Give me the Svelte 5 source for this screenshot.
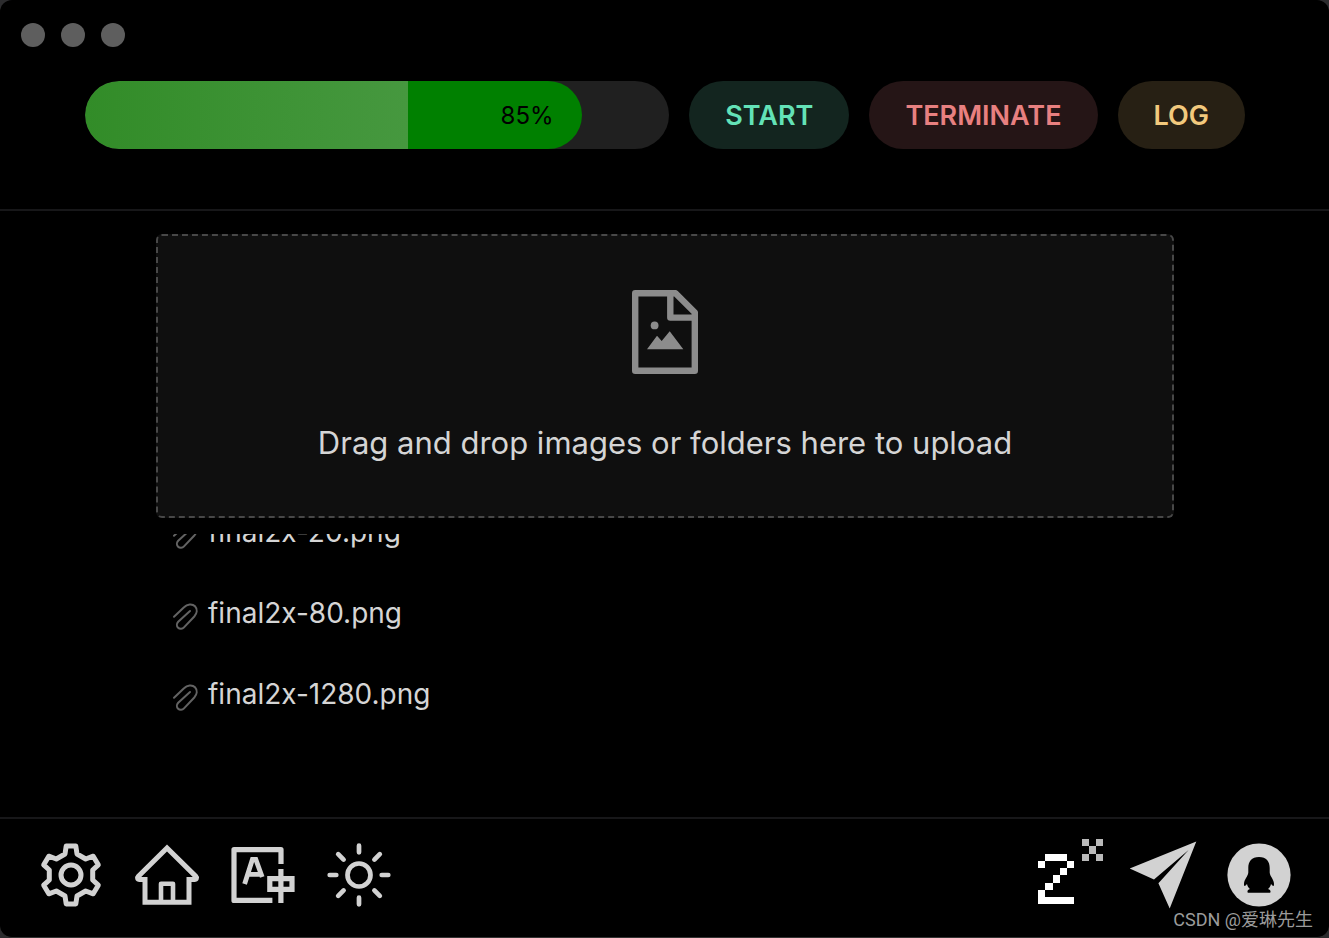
<script>
  let progress = 85;

  const files = ['final2x-20.png', 'final2x-80.png', 'final2x-1280.png'];
</script>

<div class="window">
  <header>
    <div class="lights">
      <span></span>
      <span></span>
      <span></span>
    </div>
    <div class="toolbar">
      <div class="progress" role="progressbar" aria-label="Progress" aria-valuenow={progress} aria-valuemin="0" aria-valuemax="100">
        <div class="fill" style="width: {progress}%">{progress}%</div>
      </div>
      <button class="pill start">START</button>
      <button class="pill terminate">TERMINATE</button>
      <button class="pill log">LOG</button>
    </div>
  </header>

  <main>
    <button class="dropzone">
      <svg width="66" height="84" viewBox="0 0 66 84" fill="none" stroke="currentColor" stroke-width="6.4" stroke-linejoin="round">
        <path d="M3.2 3.2H43.5L62.8 22.5V80.8H3.2Z" />
        <path d="M38.3 3.2V27.6H62.8" />
        <g fill="currentColor" stroke="none">
          <circle cx="22.6" cy="35.4" r="3.9" />
          <path d="M15 59.2L25 45.8L29.7 51L37.7 41.2L51.3 59.2Z" />
        </g>
      </svg>
      <span>Drag and drop images or folders here to upload</span>
    </button>

    <!-- kept scrolled to the newest file -->
    <ul class="files">
      {#each files as file}
        <li>
          <svg width="28" height="28" viewBox="0 0 28 28" fill="none" stroke="currentColor" stroke-width="2" stroke-linecap="round">
            <path d="M2 14.8L12 5.3C15.2 2 20.3 1.4 23 4.3C25.7 7.2 25 11.4 22.3 14.5L12 25.3C10.4 27.2 7.6 27.2 6.1 25.7C4.4 24 4.6 21.4 6.2 19.7L18 9" />
          </svg>
          <span>{file}</span>
        </li>
      {/each}
    </ul>
  </main>

  <footer>
    <nav>
      <button aria-label="Settings">
        <svg viewBox="0 0 64 64" stroke-width="5" stroke-linejoin="round">
          <path d="M27.2 3H36.8L38 11L46.7 16L54.2 13.2L59.3 21.8L53.7 27V37L59.3 42.2L54.2 50.8L46.7 48L38 53L36.8 61H27.2L26 53L17.3 48L9.8 50.8L4.7 42.2L10.3 37V27L4.7 21.8L9.8 13.2L17.3 16L26 11Z" />
          <circle cx="32" cy="32" r="10" />
        </svg>
      </button>
      <button aria-label="Home">
        <svg viewBox="0 0 64 64" stroke-width="5">
          <path d="M10 36.4H4.6C2.4 36.4 2 34.6 3.2 33.4L32 5L60.8 33.4C62 34.6 61.6 36.4 59.4 36.4H54" />
          <path d="M10 34V59.3H54V34" />
          <path d="M26 59V40.8H38V59" stroke-linejoin="round" stroke-width="4.6" />
        </svg>
      </button>
      <button aria-label="Language">
        <svg viewBox="0 0 64 64" stroke-width="5.2">
          <path d="M50 21V6.6H3V57.4H41.4" stroke-linejoin="round" />
          <path d="M13.6 41L21.4 16.5H24.8L31.2 34M16.6 31.4H31" stroke-width="4.8" />
          <path d="M38.8 35.7H61V46.3H38.8Z M49.9 26V60" />
        </svg>
      </button>
      <button aria-label="Theme">
        <svg viewBox="0 0 64 64" stroke-width="4.7" stroke-linecap="round">
          <circle cx="32" cy="32" r="11.5" />
          <path d="M32 2.7V9.3M32 54.7V61.3M2.7 32H9.3M54.7 32H61.3M11.2 11.2L16.6 16.6M47.4 47.4L52.8 52.8M52.8 11.2L47.4 16.6M16.6 47.4L11.2 52.8" />
        </svg>
      </button>
    </nav>
    <nav>
      <button aria-label="Final2x">
        <svg viewBox="0 0 64 64">
          <g transform="translate(3 -4) scale(7.25)" stroke="none" shape-rendering="crispEdges">
            <path fill="#fff" d="M1 2H4V3H1ZM0 3H1V4H0ZM4 3H5V4H4ZM3 4H4V5H3ZM2 5H3V6H2ZM1 6H2V7H1ZM0 7H1V8H5V9H0Z" />
            <path fill="#b9b9b9" d="M6 0H7V1H6ZM8 0H9V1H8ZM7 1H8V2H7ZM6 2H7V3H6ZM8 2H9V3H8Z" />
          </g>
        </svg>
      </button>
      <button aria-label="Send">
        <svg viewBox="0 0 64 64">
          <path class="solid" d="M65.3 -1.5L-1.3 25.4L23 36.5L57.6 7L27.4 40.3L38.7 65.5Z" />
        </svg>
      </button>
      <button aria-label="QQ">
        <svg viewBox="0 0 64 64">
          <circle class="solid" cx="32" cy="32" r="31.6" />
          <path class="penguin" d="M32 14C24.6 14 21.3 18.6 21.3 25V29.5C21 33.5 17 36.5 17 41C17 43 17.6 43.6 18.6 42.6L20 41C20.4 43 21.4 44.6 23 46C20.6 46.8 20 48.2 20.8 49.8H43.2C44 48.2 43.4 46.8 41 46C42.6 44.6 43.6 43 44 41L45.4 42.6C46.4 43.6 47 43 47 41C47 36.5 43 33.5 42.7 29.5V25C42.7 18.6 39.4 14 32 14Z" />
        </svg>
      </button>
    </nav>
  </footer>

  <p class="watermark">CSDN @爱琳先生</p>
</div>

<style>
  :global(body) {
    background: #2c2c2e;
  }

  .window {
    position: relative;
    display: flex;
    flex-direction: column;
    box-sizing: border-box;
    min-height: 100vh;
    background: #000;
    border-bottom: 1px solid #333;
    border-radius: 12px;
    overflow: hidden;
    color: #d5d5d5;
    font-family: Inter, "Noto Sans CJK SC", sans-serif;
  }

  button {
    margin: 0;
    padding: 0;
    border: none;
    background: none;
    color: inherit;
    font-family: inherit;
    cursor: pointer;
  }

  svg {
    display: block;
    flex-shrink: 0;
  }

  header {
    padding: 23px 0 60px;
    border-bottom: 2px solid #171719;
  }

  .lights {
    display: flex;
    gap: 16px;
    padding-left: 21px;
  }

  .lights span {
    width: 24px;
    height: 24px;
    border-radius: 50%;
    background: #5e5e5e;
  }

  .toolbar {
    display: flex;
    gap: 20px;
    margin-top: 34px;
    padding: 0 84px 0 85px;
  }

  .progress {
    flex: 1;
    height: 68px;
    border-radius: 34px;
    background: #202020;
    overflow: hidden;
  }

  .fill {
    box-sizing: border-box;
    height: 100%;
    padding-right: 28px;
    border-radius: 34px;
    background: linear-gradient(90deg, #328c28, #46983f) no-repeat left / 65% 100% green;
    color: #000;
    font-size: 24px;
    line-height: 70px;
    text-align: right;
  }

  .pill {
    height: 68px;
    padding: 0 36px;
    border-radius: 34px;
    font-size: 27px;
    font-weight: 600;
  }

  .start {
    background: #13251f;
    color: #63e2b7;
  }

  .terminate {
    background: #251516;
    color: #e88080;
  }

  .log {
    background: #272014;
    color: #f2c97d;
  }

  main {
    flex: 1;
    padding: 23px 155px 0 156px;
  }

  .dropzone {
    display: flex;
    flex-direction: column;
    align-items: center;
    gap: 44px;
    box-sizing: border-box;
    width: 100%;
    padding: 54px 40px 48px;
    border: 2px dashed #484848;
    border-radius: 6px;
    background: #0f0f0f;
    font-size: 31px;
    line-height: 50px;
  }

  .dropzone svg {
    color: #8c8c8c;
  }

  .files {
    display: flex;
    flex-direction: column;
    justify-content: flex-end;
    height: 200px;
    margin: 16px 0 0;
    padding: 0 16px;
    list-style: none;
    overflow: hidden;
  }

  .files li {
    display: flex;
    flex-shrink: 0;
    align-items: center;
    gap: 8px;
    height: 81px;
    font-size: 28px;
  }

  .files svg {
    margin-top: 6px;
    color: #636363;
  }

  footer {
    display: flex;
    justify-content: space-between;
    padding: 24px 38px 30px 39px;
    border-top: 2px solid #171719;
  }

  nav {
    display: flex;
    gap: 32px;
  }

  footer svg {
    width: 64px;
    height: 64px;
    fill: none;
    stroke: #d2d2d2;
    overflow: visible;
  }

  footer .solid {
    fill: #d2d2d2;
    stroke: none;
  }

  footer .penguin {
    fill: #000;
    stroke: none;
  }

  .watermark {
    position: absolute;
    right: 16px;
    bottom: 4px;
    margin: 0;
    color: #9b9b9b;
    font-family: Roboto, "Noto Sans CJK SC", sans-serif;
    font-size: 18px;
    line-height: 26px;
  }
</style>
